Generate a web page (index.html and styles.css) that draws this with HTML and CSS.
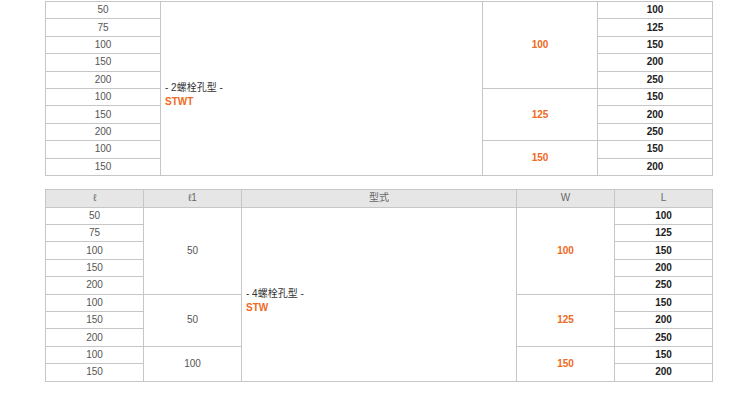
FILE: index.html
```html
<!DOCTYPE html>
<html>
<head>
<meta charset="utf-8">
<link rel="stylesheet" href="styles.css">
</head>
<body>
<div class="page">
  <table class="spec spec-top">
    <colgroup><col class="c115"><col class="c322"><col class="c115"><col class="c115"></colgroup>
    <tbody>
      <tr><td class="l">50</td><td class="type" rowspan="10">- 2螺栓孔型 -<br><span class="code">STWT</span></td><td class="w" rowspan="5">100</td><td class="L">100</td></tr>
      <tr><td class="l">75</td><td class="L">125</td></tr>
      <tr><td class="l">100</td><td class="L">150</td></tr>
      <tr><td class="l">150</td><td class="L">200</td></tr>
      <tr><td class="l">200</td><td class="L">250</td></tr>
      <tr><td class="l">100</td><td class="w" rowspan="3">125</td><td class="L">150</td></tr>
      <tr><td class="l">150</td><td class="L">200</td></tr>
      <tr><td class="l">200</td><td class="L">250</td></tr>
      <tr><td class="l">100</td><td class="w" rowspan="2">150</td><td class="L">150</td></tr>
      <tr><td class="l">150</td><td class="L">200</td></tr>
    </tbody>
  </table>

  <table class="spec spec-bottom">
    <colgroup><col class="c98"><col class="c98"><col class="c275"><col class="c98"><col class="c98"></colgroup>
    <thead>
      <tr><th>ℓ</th><th>ℓ1</th><th>型式</th><th>W</th><th>L</th></tr>
    </thead>
    <tbody>
      <tr><td class="l">50</td><td class="l" rowspan="5">50</td><td class="type" rowspan="10">- 4螺栓孔型 -<br><span class="code">STW</span></td><td class="w" rowspan="5">100</td><td class="L">100</td></tr>
      <tr><td class="l">75</td><td class="L">125</td></tr>
      <tr><td class="l">100</td><td class="L">150</td></tr>
      <tr><td class="l">150</td><td class="L">200</td></tr>
      <tr><td class="l">200</td><td class="L">250</td></tr>
      <tr><td class="l">100</td><td class="l" rowspan="3">50</td><td class="w" rowspan="3">125</td><td class="L">150</td></tr>
      <tr><td class="l">150</td><td class="L">200</td></tr>
      <tr><td class="l">200</td><td class="L">250</td></tr>
      <tr><td class="l">100</td><td class="l" rowspan="2">100</td><td class="w" rowspan="2">150</td><td class="L">150</td></tr>
      <tr><td class="l">150</td><td class="L">200</td></tr>
    </tbody>
  </table>
</div>
</body>
</html>
```

FILE: styles.css
```css
html, body {
  margin: 0;
  padding: 0;
  background: #ffffff;
}

.page {
  padding: 1px 0 0 45px;
  font-family: "Liberation Sans", Arial, "Noto Sans CJK SC", sans-serif;
  font-size: 10px;
}

.spec {
  border-collapse: collapse;
  table-layout: fixed;
  width: 668px;
}

.spec-bottom {
  margin-top: 13px;
}

.c115 { width: 115px; }
.c322 { width: 322px; }
.c98 { width: 98px; }
.c275 { width: 275px; }

.spec td,
.spec th {
  border: 1px solid #c6c6c6;
  padding: 0;
  height: 16.4px;
  text-align: center;
  vertical-align: middle;
  line-height: 14px;
}

.spec th {
  background: #e6e6e6;
  color: #666666;
  font-weight: normal;
  height: 16.7px;
}

.l {
  color: #555555;
}

.w {
  color: #ef6a22;
  font-weight: bold;
}

.L {
  color: #222222;
  font-weight: bold;
}

.spec td.type {
  text-align: left;
  padding: 14px 0 0 4px;
  color: #333333;
}

.code {
  color: #ef6a22;
  font-weight: bold;
}
```
